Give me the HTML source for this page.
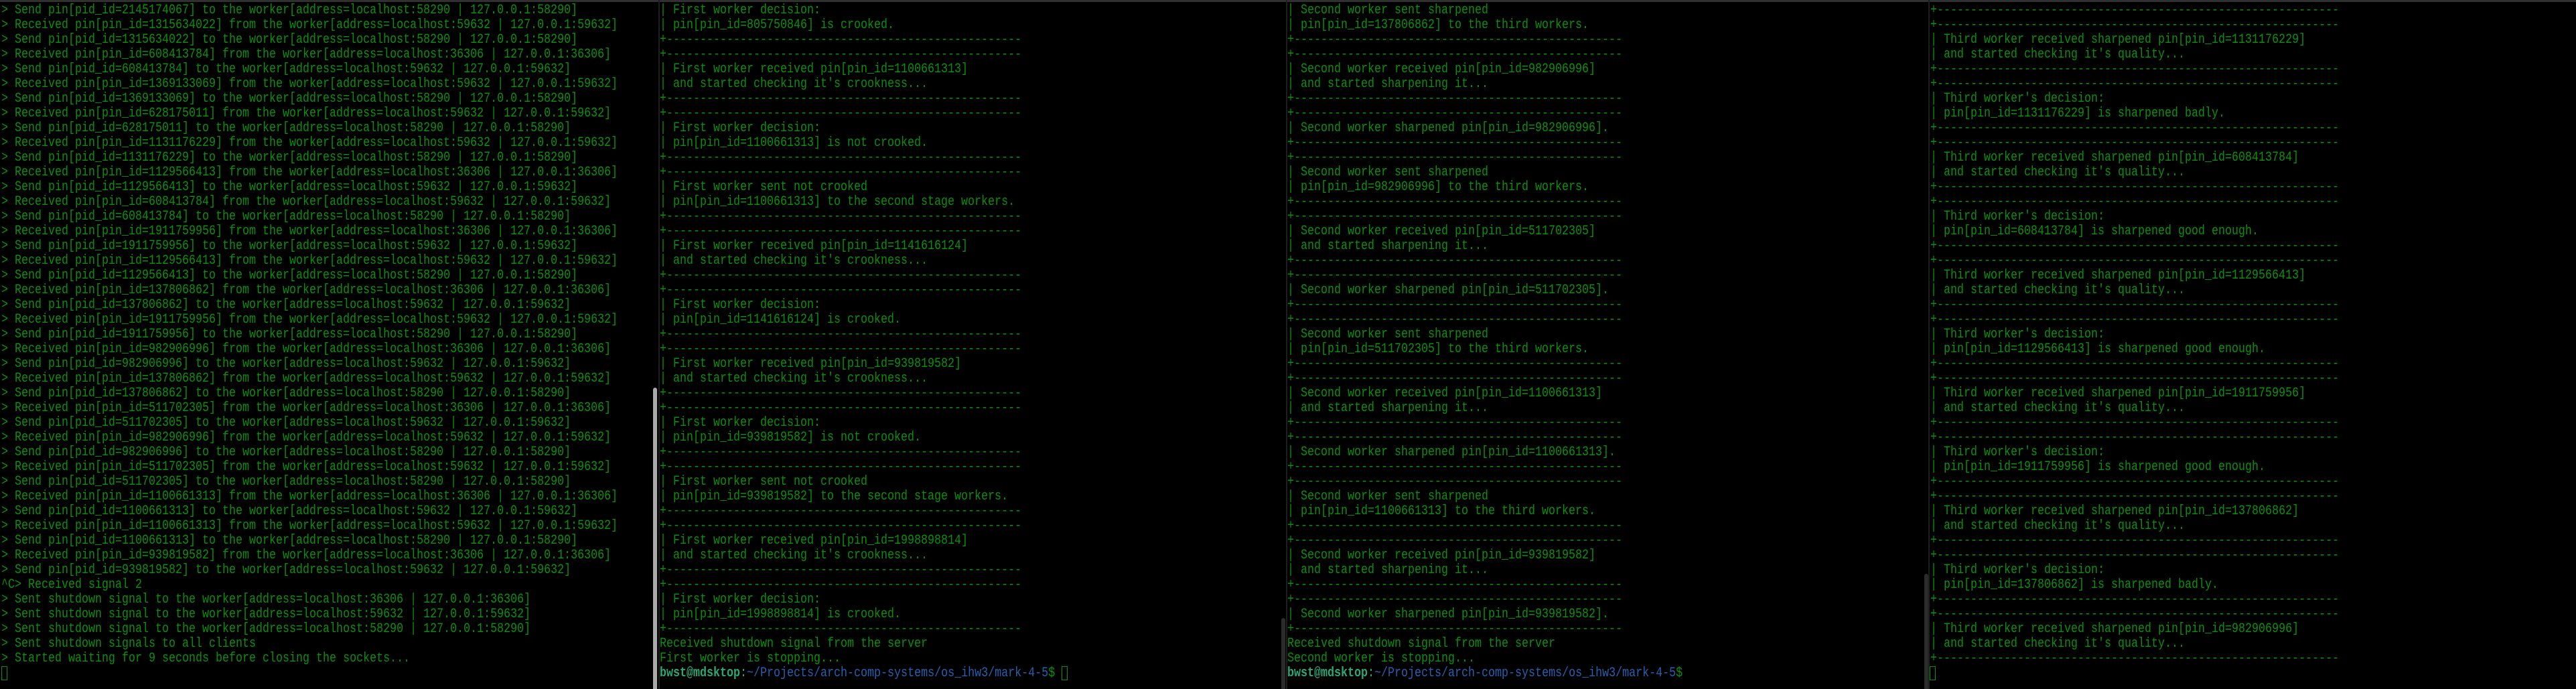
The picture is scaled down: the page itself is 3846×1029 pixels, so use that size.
<!DOCTYPE html>
<html><head><meta charset="utf-8"><style>
html,body{margin:0;padding:0;background:#000;width:3846px;height:1029px;overflow:hidden;position:relative}
.top{position:absolute;left:0;top:0;width:3846px;height:3px;background:#303030}
.sep{position:absolute;top:0;width:2px;height:1029px;background:#1e1e1e}
.sb{position:absolute;width:6px;bottom:0;border-radius:3px 3px 0 0}
pre{position:absolute;top:5px;margin:0;font-family:"Liberation Mono",monospace;font-size:20px;line-height:22px;letter-spacing:0;color:#0a900a;white-space:pre;transform:scaleX(0.8333);transform-origin:0 0}
.u{color:#2aa876;font-weight:bold}.p{color:#2660b0}.g{color:#2aa876}
.cur{position:absolute;width:9px;height:21px;border:1.5px solid #0a900a;box-sizing:border-box}
</style></head><body>
<div class="top"></div>
<div class="sep" style="left:983px"></div>
<div class="sep" style="left:1920px"></div>
<div class="sep" style="left:2879px"></div>
<div class="sb" style="left:975px;top:579px;background:#aaa"></div>
<div class="sb" style="left:1913px;top:923px;background:#2c2c2c"></div>
<div class="sb" style="left:2873px;top:857px;background:#2c2c2c"></div>
<pre style="left:2px">&gt; Send pin[pid_id=2145174067] to the worker[address=localhost:58290 | 127.0.0.1:58290]
&gt; Received pin[pin_id=1315634022] from the worker[address=localhost:59632 | 127.0.0.1:59632]
&gt; Send pin[pid_id=1315634022] to the worker[address=localhost:58290 | 127.0.0.1:58290]
&gt; Received pin[pin_id=608413784] from the worker[address=localhost:36306 | 127.0.0.1:36306]
&gt; Send pin[pid_id=608413784] to the worker[address=localhost:59632 | 127.0.0.1:59632]
&gt; Received pin[pin_id=1369133069] from the worker[address=localhost:59632 | 127.0.0.1:59632]
&gt; Send pin[pid_id=1369133069] to the worker[address=localhost:58290 | 127.0.0.1:58290]
&gt; Received pin[pin_id=628175011] from the worker[address=localhost:59632 | 127.0.0.1:59632]
&gt; Send pin[pid_id=628175011] to the worker[address=localhost:58290 | 127.0.0.1:58290]
&gt; Received pin[pin_id=1131176229] from the worker[address=localhost:59632 | 127.0.0.1:59632]
&gt; Send pin[pid_id=1131176229] to the worker[address=localhost:58290 | 127.0.0.1:58290]
&gt; Received pin[pin_id=1129566413] from the worker[address=localhost:36306 | 127.0.0.1:36306]
&gt; Send pin[pid_id=1129566413] to the worker[address=localhost:59632 | 127.0.0.1:59632]
&gt; Received pin[pin_id=608413784] from the worker[address=localhost:59632 | 127.0.0.1:59632]
&gt; Send pin[pid_id=608413784] to the worker[address=localhost:58290 | 127.0.0.1:58290]
&gt; Received pin[pin_id=1911759956] from the worker[address=localhost:36306 | 127.0.0.1:36306]
&gt; Send pin[pid_id=1911759956] to the worker[address=localhost:59632 | 127.0.0.1:59632]
&gt; Received pin[pin_id=1129566413] from the worker[address=localhost:59632 | 127.0.0.1:59632]
&gt; Send pin[pid_id=1129566413] to the worker[address=localhost:58290 | 127.0.0.1:58290]
&gt; Received pin[pin_id=137806862] from the worker[address=localhost:36306 | 127.0.0.1:36306]
&gt; Send pin[pid_id=137806862] to the worker[address=localhost:59632 | 127.0.0.1:59632]
&gt; Received pin[pin_id=1911759956] from the worker[address=localhost:59632 | 127.0.0.1:59632]
&gt; Send pin[pid_id=1911759956] to the worker[address=localhost:58290 | 127.0.0.1:58290]
&gt; Received pin[pin_id=982906996] from the worker[address=localhost:36306 | 127.0.0.1:36306]
&gt; Send pin[pid_id=982906996] to the worker[address=localhost:59632 | 127.0.0.1:59632]
&gt; Received pin[pin_id=137806862] from the worker[address=localhost:59632 | 127.0.0.1:59632]
&gt; Send pin[pid_id=137806862] to the worker[address=localhost:58290 | 127.0.0.1:58290]
&gt; Received pin[pin_id=511702305] from the worker[address=localhost:36306 | 127.0.0.1:36306]
&gt; Send pin[pid_id=511702305] to the worker[address=localhost:59632 | 127.0.0.1:59632]
&gt; Received pin[pin_id=982906996] from the worker[address=localhost:59632 | 127.0.0.1:59632]
&gt; Send pin[pid_id=982906996] to the worker[address=localhost:58290 | 127.0.0.1:58290]
&gt; Received pin[pin_id=511702305] from the worker[address=localhost:59632 | 127.0.0.1:59632]
&gt; Send pin[pid_id=511702305] to the worker[address=localhost:58290 | 127.0.0.1:58290]
&gt; Received pin[pin_id=1100661313] from the worker[address=localhost:36306 | 127.0.0.1:36306]
&gt; Send pin[pid_id=1100661313] to the worker[address=localhost:59632 | 127.0.0.1:59632]
&gt; Received pin[pin_id=1100661313] from the worker[address=localhost:59632 | 127.0.0.1:59632]
&gt; Send pin[pid_id=1100661313] to the worker[address=localhost:58290 | 127.0.0.1:58290]
&gt; Received pin[pin_id=939819582] from the worker[address=localhost:36306 | 127.0.0.1:36306]
&gt; Send pin[pid_id=939819582] to the worker[address=localhost:59632 | 127.0.0.1:59632]
^C&gt; Received signal 2
&gt; Sent shutdown signal to the worker[address=localhost:36306 | 127.0.0.1:36306]
&gt; Sent shutdown signal to the worker[address=localhost:59632 | 127.0.0.1:59632]
&gt; Sent shutdown signal to the worker[address=localhost:58290 | 127.0.0.1:58290]
&gt; Sent shutdown signals to all clients
&gt; Started waiting for 9 seconds before closing the sockets...</pre>
<div class="cur" style="left:2px;top:995px"></div>
<pre style="left:985px">| First worker decision:
| pin[pin_id=805750846] is crooked.
+-----------------------------------------------------
+-----------------------------------------------------
| First worker received pin[pin_id=1100661313]
| and started checking it's crookness...
+-----------------------------------------------------
+-----------------------------------------------------
| First worker decision:
| pin[pin_id=1100661313] is not crooked.
+-----------------------------------------------------
+-----------------------------------------------------
| First worker sent not crooked
| pin[pin_id=1100661313] to the second stage workers.
+-----------------------------------------------------
+-----------------------------------------------------
| First worker received pin[pin_id=1141616124]
| and started checking it's crookness...
+-----------------------------------------------------
+-----------------------------------------------------
| First worker decision:
| pin[pin_id=1141616124] is crooked.
+-----------------------------------------------------
+-----------------------------------------------------
| First worker received pin[pin_id=939819582]
| and started checking it's crookness...
+-----------------------------------------------------
+-----------------------------------------------------
| First worker decision:
| pin[pin_id=939819582] is not crooked.
+-----------------------------------------------------
+-----------------------------------------------------
| First worker sent not crooked
| pin[pin_id=939819582] to the second stage workers.
+-----------------------------------------------------
+-----------------------------------------------------
| First worker received pin[pin_id=1998898814]
| and started checking it's crookness...
+-----------------------------------------------------
+-----------------------------------------------------
| First worker decision:
| pin[pin_id=1998898814] is crooked.
+-----------------------------------------------------
Received shutdown signal from the server
First worker is stopping...
<span class="u">bwst@mdsktop</span><span class="g">:</span><span class="p">~/Projects/arch-comp-systems/os_ihw3/mark-4-5</span>$ </pre>
<div class="cur" style="left:1585px;top:995px"></div>
<pre style="left:1922px">| Second worker sent sharpened
| pin[pin_id=137806862] to the third workers.
+-------------------------------------------------
+-------------------------------------------------
| Second worker received pin[pin_id=982906996]
| and started sharpening it...
+-------------------------------------------------
+-------------------------------------------------
| Second worker sharpened pin[pin_id=982906996].
+-------------------------------------------------
+-------------------------------------------------
| Second worker sent sharpened
| pin[pin_id=982906996] to the third workers.
+-------------------------------------------------
+-------------------------------------------------
| Second worker received pin[pin_id=511702305]
| and started sharpening it...
+-------------------------------------------------
+-------------------------------------------------
| Second worker sharpened pin[pin_id=511702305].
+-------------------------------------------------
+-------------------------------------------------
| Second worker sent sharpened
| pin[pin_id=511702305] to the third workers.
+-------------------------------------------------
+-------------------------------------------------
| Second worker received pin[pin_id=1100661313]
| and started sharpening it...
+-------------------------------------------------
+-------------------------------------------------
| Second worker sharpened pin[pin_id=1100661313].
+-------------------------------------------------
+-------------------------------------------------
| Second worker sent sharpened
| pin[pin_id=1100661313] to the third workers.
+-------------------------------------------------
+-------------------------------------------------
| Second worker received pin[pin_id=939819582]
| and started sharpening it...
+-------------------------------------------------
+-------------------------------------------------
| Second worker sharpened pin[pin_id=939819582].
+-------------------------------------------------
Received shutdown signal from the server
Second worker is stopping...
<span class="u">bwst@mdsktop</span><span class="g">:</span><span class="p">~/Projects/arch-comp-systems/os_ihw3/mark-4-5</span>$ </pre>
<pre style="left:2882px">+------------------------------------------------------------
+------------------------------------------------------------
| Third worker received sharpened pin[pin_id=1131176229]
| and started checking it's quality...
+------------------------------------------------------------
+------------------------------------------------------------
| Third worker's decision:
| pin[pin_id=1131176229] is sharpened badly.
+------------------------------------------------------------
+------------------------------------------------------------
| Third worker received sharpened pin[pin_id=608413784]
| and started checking it's quality...
+------------------------------------------------------------
+------------------------------------------------------------
| Third worker's decision:
| pin[pin_id=608413784] is sharpened good enough.
+------------------------------------------------------------
+------------------------------------------------------------
| Third worker received sharpened pin[pin_id=1129566413]
| and started checking it's quality...
+------------------------------------------------------------
+------------------------------------------------------------
| Third worker's decision:
| pin[pin_id=1129566413] is sharpened good enough.
+------------------------------------------------------------
+------------------------------------------------------------
| Third worker received sharpened pin[pin_id=1911759956]
| and started checking it's quality...
+------------------------------------------------------------
+------------------------------------------------------------
| Third worker's decision:
| pin[pin_id=1911759956] is sharpened good enough.
+------------------------------------------------------------
+------------------------------------------------------------
| Third worker received sharpened pin[pin_id=137806862]
| and started checking it's quality...
+------------------------------------------------------------
+------------------------------------------------------------
| Third worker's decision:
| pin[pin_id=137806862] is sharpened badly.
+------------------------------------------------------------
+------------------------------------------------------------
| Third worker received sharpened pin[pin_id=982906996]
| and started checking it's quality...
+------------------------------------------------------------</pre>
<div class="cur" style="left:2881px;top:995px"></div>
</body></html>
